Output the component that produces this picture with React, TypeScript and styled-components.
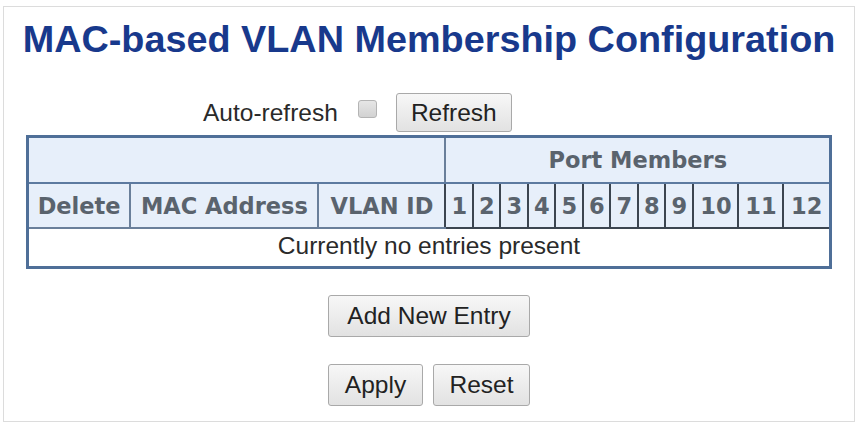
import React, { useState } from "react";
import styled, { createGlobalStyle } from "styled-components";

const GlobalStyle = createGlobalStyle`
  html, body {
    margin: 0;
    padding: 0;
    background: #ffffff;
  }
  body {
    font-family: "Liberation Sans", Arial, sans-serif;
    color: #2a2a2a;
  }
`;

const Frame = styled.div`
  margin: 6px 1px 2px 3px;
  height: 416px;
  border: 1px solid #dcdcdc;
  box-sizing: border-box;
  display: flex;
  flex-direction: column;
  align-items: center;
`;

const Title = styled.h1`
  margin: 10px 0 0;
  font-family: "Liberation Sans", Arial, sans-serif;
  font-weight: bold;
  font-size: 37.8px;
  line-height: 44px;
  color: #18398c;
`;

const RefreshBar = styled.div`
  align-self: stretch;
  display: flex;
  align-items: center;
  padding-left: 199px;
  margin-top: 32px;
  font-size: 24.5px;
`;

const CheckBox = styled.span`
  width: 19px;
  height: 18px;
  margin: 0 19px 8px 20px;
  box-sizing: border-box;
  border: 1px solid #b4b4b4;
  border-radius: 3px;
  background: linear-gradient(#e6e6e6, #d2d2d2);
`;

const Button = styled.button<{ $w: number; $h?: number }>`
  width: ${(p) => p.$w}px;
  height: ${(p) => p.$h ?? 42}px;
  padding: 0;
  box-sizing: border-box;
  border: 1px solid #a9a9a9;
  border-radius: 3px;
  background: linear-gradient(#f7f7f7, #e2e2e2);
  font-family: "Liberation Sans", Arial, sans-serif;
  font-size: 24.5px;
  color: #222;
  cursor: pointer;
`;

const Table = styled.table`
  margin-top: 3px;
  width: 803px;
  table-layout: fixed;
  border-collapse: collapse;
  border: 3px solid #4f6f98;
`;

const Head = styled.th<{ $dark?: boolean }>`
  padding: 0;
  background: #e7effa;
  border-left: 2px solid ${(p) => (p.$dark ? "#3c4550" : "#6a7f9a")};
  border-bottom: 2px solid ${(p) => (p.$dark ? "#3c4550" : "#6a7f9a")};
  font-family: "DejaVu Sans", Verdana, sans-serif;
  font-weight: bold;
  font-size: 22.5px;
  color: #5a636d;
  text-align: center;
  white-space: nowrap;
  overflow: hidden;
`;

const TopHead = styled(Head)`
  height: 44px;
  border-bottom: 2px solid #5d7aa0;
`;

const SubHead = styled(Head)`
  height: 43px;
`;

const EmptyCell = styled.td`
  height: 34px;
  padding: 0 0 3px;
  text-align: center;
  font-size: 24.5px;
  color: #2a2a2a;
  background: #ffffff;
`;

const ButtonRow = styled.div<{ $top: number }>`
  display: flex;
  gap: 10px;
  margin-top: ${(p) => p.$top}px;
`;

const portWidths = [28, 27, 28, 27, 28, 27, 28, 27, 28, 45, 45, 47];

export default function App() {
  const [auto, setAuto] = useState(false);

  return (
    <>
      <GlobalStyle />
      <Frame>
        <Title>MAC-based VLAN Membership Configuration</Title>

        <RefreshBar>
          <span>Auto-refresh</span>
          <CheckBox role="checkbox" aria-checked={auto} onClick={() => setAuto(!auto)} />
          <Button $w={116} $h={39}>Refresh</Button>
        </RefreshBar>

        <Table>
          <colgroup>
            <col style={{ width: 103 }} />
            <col style={{ width: 188 }} />
            <col style={{ width: 127 }} />
            {portWidths.map((w, i) => (
              <col key={i} style={{ width: w }} />
            ))}
          </colgroup>
          <thead>
            <tr>
              <TopHead colSpan={3} />
              <TopHead colSpan={12}>Port Members</TopHead>
            </tr>
            <tr>
              <SubHead>Delete</SubHead>
              <SubHead>MAC Address</SubHead>
              <SubHead>VLAN ID</SubHead>
              {portWidths.map((_, i) => (
                <SubHead key={i} $dark>
                  {i + 1}
                </SubHead>
              ))}
            </tr>
          </thead>
          <tbody>
            <tr>
              <EmptyCell colSpan={15}>Currently no entries present</EmptyCell>
            </tr>
          </tbody>
        </Table>

        <ButtonRow $top={26}>
          <Button $w={202}>Add New Entry</Button>
        </ButtonRow>
        <ButtonRow $top={27}>
          <Button $w={95}>Apply</Button>
          <Button $w={97}>Reset</Button>
        </ButtonRow>
      </Frame>
    </>
  );
}
